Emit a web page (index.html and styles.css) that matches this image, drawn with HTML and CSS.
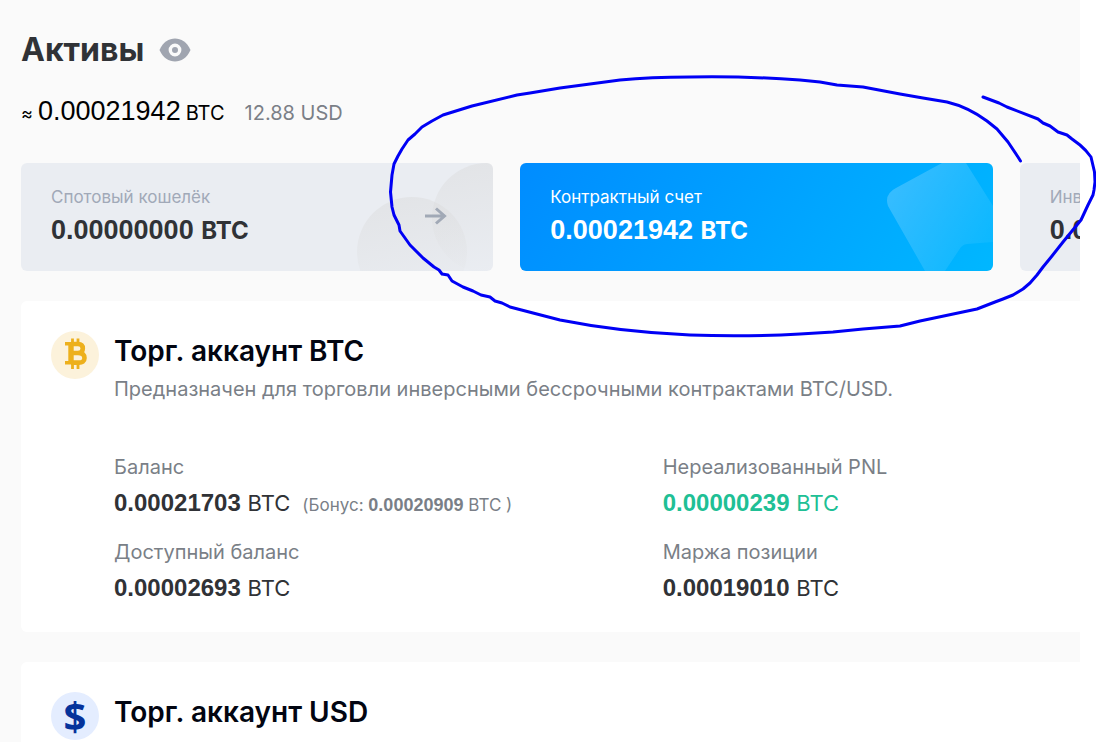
FILE: index.html
```html
<!DOCTYPE html>
<html lang="ru">
<head>
<meta charset="utf-8">
<meta name="viewport" content="width=device-width, initial-scale=1">
<title>Активы</title>
<link rel="stylesheet" href="styles.css">
</head>
<body>
<main class="page">
  <header class="head">
    <div class="title-row">
      <h1 class="title">Активы</h1>
      <button class="eye" type="button" aria-label="Скрыть баланс">
        <svg width="32" height="24" viewBox="0 0 32 24"><path d="M.5 12C4 4 10 .5 16 .5S28 4 31.500 12C28 20 22 23.500 16 23.500S4 20 .5 12Z" fill="#a0a5b0"/><circle cx="16" cy="12" r="4.700" fill="none" stroke="#fafafa" stroke-width="3.400"/></svg>
      </button>
    </div>
    <p class="total"><span class="approx">≈</span><span class="total-num">0.00021942</span><span class="total-unit">BTC</span><span class="total-usd">12.88 USD</span></p>
  </header>

  <nav class="wallets" aria-label="Кошельки">
    <button class="wallet" type="button">
      <svg class="wallet-art" width="140" height="108" viewBox="0 0 140 108">
        <defs><linearGradient id="disc" x1=".4" y1="0" x2=".6" y2="1"><stop offset="0" stop-color="#d8d8d8" stop-opacity=".42"/><stop offset="1" stop-color="#d8d8d8" stop-opacity="0"/></linearGradient></defs>
        <circle cx="59" cy="89" r="55" fill="url(#disc)"/>
        <circle cx="134" cy="55" r="55" fill="url(#disc)"/>
        <path d="M72 53H92M83 45.500L91.500 53L83 60.500" fill="none" stroke="#a1a9b6" stroke-width="3"/>
      </svg>
      <span class="wallet-name">Спотовый кошелёк</span>
      <span class="wallet-sum">0.00000000 <span class="unit">BTC</span></span>
    </button>
    <button class="wallet wallet-active" type="button">
      <svg class="wallet-art" width="140" height="108" viewBox="0 0 140 108">
        <defs><linearGradient id="tile" x1="0" y1=".2" x2="1" y2=".8"><stop offset="0" stop-color="#fff" stop-opacity=".22"/><stop offset="1" stop-color="#fff" stop-opacity=".04"/></linearGradient></defs>
        <path d="M89 0H113L140 43V79L114 81Q111 81 108 84L92 108H72L35 43Q31 31 43 25Z" fill="url(#tile)"/>
      </svg>
      <span class="wallet-name">Контрактный счет</span>
      <span class="wallet-sum">0.00021942 <span class="unit">BTC</span></span>
    </button>
    <button class="wallet" type="button">
      <span class="wallet-name">Инвестиции</span>
      <span class="wallet-sum">0.00000000 <span class="unit">BTC</span></span>
    </button>
  </nav>

  <section class="account">
    <svg class="coin" width="48" height="48" viewBox="0 0 48 48">
      <circle cx="24" cy="24" r="24" fill="#fcf2db"/>
      <g fill="none" stroke="#edb01c">
        <path d="M21.500 7.500V13M27 7.500V13M21.500 32V38M27 32V38" stroke-width="2.800"/>
        <path d="M14 12.800H27M14 31.700H27" stroke-width="3.400"/>
        <path d="M20 12V33" stroke-width="5.400"/>
        <path d="M20 13H27Q31.800 13 31.800 17.400T27 22H20M27 22Q33.500 22 33.500 27T27 31.600H20" stroke-width="4.600"/>
      </g>
    </svg>
    <div class="account-body">
      <h2 class="account-title">Торг. аккаунт BTC</h2>
      <p class="account-note">Предназначен для торговли инверсными бессрочными контрактами BTC/USD.</p>
      <dl class="stats">
        <div class="stat">
          <dt>Баланс</dt>
          <dd><b>0.00021703</b> <span class="unit">BTC</span><span class="bonus">(Бонус: <b>0.00020909</b> BTC )</span></dd>
        </div>
        <div class="stat">
          <dt>Нереализованный PNL</dt>
          <dd class="gain"><b>0.00000239</b> <span class="unit">BTC</span></dd>
        </div>
        <div class="stat">
          <dt>Доступный баланс</dt>
          <dd><b>0.00002693</b> <span class="unit">BTC</span></dd>
        </div>
        <div class="stat">
          <dt>Маржа позиции</dt>
          <dd><b>0.00019010</b> <span class="unit">BTC</span></dd>
        </div>
      </dl>
    </div>
  </section>

  <section class="account account-last">
    <span class="coin coin-usd">$</span>
    <div class="account-body">
      <h2 class="account-title">Торг. аккаунт USD</h2>
    </div>
  </section>
</main>

<svg class="marker" viewBox="0 0 1096 742" aria-hidden="true">
  <path d="M1020.500 161L1018 157L1008 142L997 129L987 121Q968 107 947 102L923 98L900 94L863 87L837 85L820 82L800 80Q745 76 690 77Q650 77 620 80L590 84L560 88L530 93L517 95L472 106L443 115L432 121L422 127L415 134L408 140L402 149L398 156L394 164L392 175L390.500 192L392 207L394 215L399 225L400 231L410 245L423 258L434 267L439 270L442 274L448 275L452 281L463 287L473 291L481 295L490 297L495 301L502 303L510 307L533 313L560 320Q620 332 690 335Q745 337 800 334L833 332L863 329L900 326L920 321L977 309L995 302L1003 299L1013 295L1023 289L1030 283L1037 275L1043 267L1052 256L1063 242L1072 231L1081 220L1088 205L1093 195L1094 190L1095 182L1094.500 172L1091 157Q1086 150 1080 145L1072 139L1067 135L1058 132L1050 126L1043 123L1038 119L1007 107L999 103L983 97" fill="none" stroke="#0000f5" stroke-width="3" stroke-linejoin="round" stroke-linecap="round"/>
</svg>
</body>
</html>
```
FILE: styles.css
```css
* {
  box-sizing: border-box;
}

body,
h1,
h2,
p,
dl,
dd {
  margin: 0;
}

body {
  height: 100vh;
  overflow: hidden;
  background: #fff;
  color: #303236;
  font-family: Inter, "Liberation Sans", sans-serif;
}

button {
  padding: 0;
  border: 0;
  background: none;
  color: inherit;
  font: inherit;
  text-align: left;
}

.page {
  height: 100vh;
  margin-right: 16px;
  padding: 30px 0 0 21px;
  overflow: hidden;
  background: #fafafa;
}

.title-row {
  display: flex;
  align-items: center;
  gap: 15px;
}

.title {
  font-size: 32px;
  line-height: 40px;
  font-weight: 700;
}

.eye svg {
  display: block;
}

.total {
  display: flex;
  align-items: baseline;
  margin-top: 25px;
  line-height: 32px;
  color: #000;
}

.approx {
  width: 17px;
  font-size: 18px;
}

.total-num {
  font-family: "Liberation Sans", Arial, sans-serif;
  font-size: 27px;
}

.total-unit {
  margin-left: 5px;
  font-size: 20px;
}

.total-usd {
  margin-left: 20px;
  font-size: 20px;
  color: #7a7f87;
}

.wallets {
  display: flex;
  gap: 27px;
  margin-top: 33px;
  overflow: hidden;
}

.wallet {
  position: relative;
  display: flex;
  flex: 0 0 44.6%;
  flex-direction: column;
  padding: 22px 30px 20px;
  overflow: hidden;
  border-radius: 6px;
  background: #eaedf2;
}

.wallet-active {
  background: linear-gradient(125deg, #008cff, #00b7ff);
  color: #fff;
}

.wallet-art {
  position: absolute;
  top: 0;
  right: 0;
}

.wallet-name {
  font-size: 17px;
  line-height: 24px;
  color: #a1a9b8;
}

.wallet-active .wallet-name {
  color: #fff;
}

.wallet-sum {
  font-family: "Liberation Sans", Arial, sans-serif;
  font-size: 27px;
  line-height: 42px;
  font-weight: 700;
  white-space: nowrap;
}

.unit {
  font-family: Inter, "Liberation Sans", sans-serif;
  font-size: 22px;
  line-height: 1;
}

.wallet-sum .unit {
  font-size: 24px;
}

.account {
  display: flex;
  gap: 15px;
  margin-top: 30px;
  padding: 30px 0 26px 30px;
  border-radius: 6px 0 0 6px;
  background: #fff;
}

.account-last {
  min-height: 120px;
}

.coin {
  flex: none;
  width: 48px;
  height: 48px;
}

.coin-usd {
  border-radius: 50%;
  background: #e4edff;
  color: #05339b;
  font: 700 40px/48px "Open Sans", sans-serif;
  text-align: center;
}

.account-body {
  flex: 1;
  min-width: 0;
}

.account-title {
  font-size: 28px;
  line-height: 40px;
  font-weight: 600;
  color: #020511;
}

.account-note {
  margin-top: 4px;
  font-size: 20px;
  line-height: 28px;
  color: #7a7f87;
}

.stats {
  display: grid;
  grid-template-columns: 56.8% 1fr;
  row-gap: 17px;
  margin-top: 50px;
}

.stat dt {
  font-size: 20px;
  line-height: 28px;
  color: #7a7f87;
}

.stat dd {
  margin-top: 4px;
  font-size: 24px;
  line-height: 36px;
}

.stat b {
  font-family: "Liberation Sans", Arial, sans-serif;
  line-height: 1;
}

.stat .gain {
  color: #20bf95;
}

.bonus {
  margin-left: 12px;
  font-size: 17px;
  line-height: 1;
  color: #7a7f87;
}

.bonus b {
  font-size: 18px;
}

.marker {
  position: absolute;
  top: 0;
  left: 0;
  width: 100%;
  pointer-events: none;
}
```
